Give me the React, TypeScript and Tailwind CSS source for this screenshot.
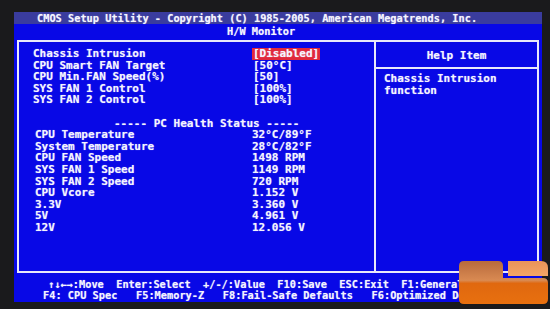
const mono =
  "font-['DejaVu_Sans_Mono','Liberation_Mono',monospace] font-bold text-[#f4f4ff] [text-shadow:0_0_1px_rgba(255,255,255,0.55)]";

const settings: [string, string, boolean?][] = [
  ["Chassis Intrusion", "[Disabled]", true],
  ["CPU Smart FAN Target", "[50°C]"],
  ["CPU Min.FAN Speed(%)", "[50]"],
  ["SYS FAN 1 Control", "[100%]"],
  ["SYS FAN 2 Control", "[100%]"],
];

const health: [string, string][] = [
  ["CPU Temperature", "32°C/89°F"],
  ["System Temperature", "28°C/82°F"],
  ["CPU FAN Speed", "1498 RPM"],
  ["SYS FAN 1 Speed", "1149 RPM"],
  ["SYS FAN 2 Speed", "720 RPM"],
  ["CPU Vcore", "1.152 V"],
  ["3.3V", "3.360 V"],
  ["5V", "4.961 V"],
  ["12V", "12.056 V"],
];

const Logo = () => (
  <svg
    className="absolute left-[458px] top-[260px]"
    width="92"
    height="46"
    viewBox="0 0 92 46"
  >
    <defs>
      <linearGradient id="lr-body" x1="0" y1="0" x2="0" y2="1">
        <stop offset="0" stopColor="#b86a3c" />
        <stop offset="0.45" stopColor="#d98a52" />
        <stop offset="0.52" stopColor="#e0680f" />
        <stop offset="1" stopColor="#e8700f" />
      </linearGradient>
      <linearGradient id="lr-cap" x1="0" y1="0" x2="0" y2="1">
        <stop offset="0" stopColor="#e9935a" />
        <stop offset="1" stopColor="#f4a566" />
      </linearGradient>
    </defs>
    <path
      d="M6 1 H40 Q45 1 45 6 V18 H85 Q90 18 90 23 V39 Q90 44 85 44 H6 Q1 44 1 39 V6 Q1 1 6 1 Z"
      fill="url(#lr-body)"
    />
    <path d="M50 1 H83 Q90 1 90 8 V16 H50 Z" fill="url(#lr-cap)" />
  </svg>
);

export default function App() {
  return (
    <div className="relative w-[550px] h-[309px] overflow-hidden bg-[#1a1a1c] pt-[12px] pl-[14px]">
      <div className={`w-[528px] h-[290px] bg-[#0808e6] flex flex-col ${mono}`}>
        {/* title */}
        <div className="h-[12px] bg-[#3a3c9e] pl-[23px] text-[10.3px] leading-[13px] whitespace-pre">
          CMOS Setup Utility - Copyright (C) 1985-2005, American Megatrends, Inc.
        </div>
        <div className="h-[16px] pl-[213px] text-[10.3px] leading-[15px]">
          H/W Monitor
        </div>

        {/* main frame */}
        <div className="ml-[3px] w-[522px] h-[233px] border-2 border-[#e8e8fa] flex">
          <div className="w-[357px] border-r-2 border-[#e8e8fa] pt-[6px] text-[11px] leading-[11.6px]">
            {settings.map(([label, value, active]) => (
              <div key={label} className="flex pl-[14px]">
                <span className="w-[220px] whitespace-pre">{label}</span>
                <span
                  className={
                    active ? "bg-[#e0283c] px-[1px] -ml-[1px]" : ""
                  }
                >
                  {value}
                </span>
              </div>
            ))}
            <div className="h-[11.6px]" />
            <div className="pl-[95px] whitespace-pre">
              ----- PC Health Status -----
            </div>
            {health.map(([label, value]) => (
              <div key={label} className="flex pl-[16px]">
                <span className="w-[217px]">{label}</span>
                <span className="whitespace-pre">{value}</span>
              </div>
            ))}
          </div>
          <div className="flex-1 flex flex-col text-[11px]">
            <div className="h-[27px] pt-[2px] border-b-2 border-[#e8e8fa] text-center leading-[23px]">
              Help Item
            </div>
            <div className="pt-[4px] pl-[8px] leading-[11.6px]">
              <div>Chassis Intrusion</div>
              <div>function</div>
            </div>
          </div>
        </div>

        {/* key legend */}
        <div className="pt-[6px] text-[10.3px] leading-[11px] whitespace-pre">
          <div className="pl-[34px]">
            ↑↓←→:Move  Enter:Select  +/-/:Value  F10:Save  ESC:Exit  F1:General Help
          </div>
          <div className="pl-[29px]">
            F4: CPU Spec   F5:Memory-Z   F8:Fail-Safe Defaults   F6:Optimized Defaults
          </div>
        </div>
      </div>
      <Logo />
    </div>
  );
}
